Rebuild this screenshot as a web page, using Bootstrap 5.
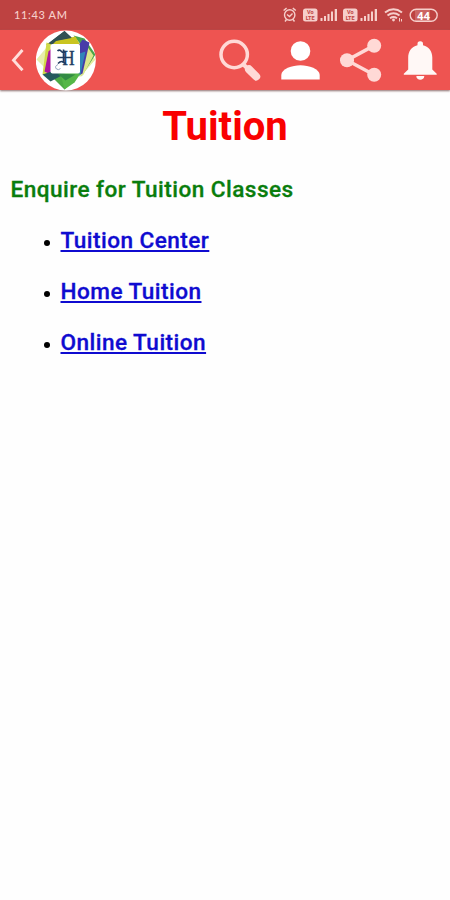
<!DOCTYPE html>
<html lang="en">
<head>
<meta charset="utf-8">
<meta name="viewport" content="width=device-width, initial-scale=1">
<title>Tuition</title>
<link href="https://cdn.jsdelivr.net/npm/bootstrap@5.3.0/dist/css/bootstrap.min.css" rel="stylesheet">
<style>
body{font-family:Roboto,"Liberation Sans",sans-serif;background:#fefefe;color:#000;height:900px;overflow:hidden}
svg{display:block;flex:none}
.status{height:30px;background:#be4241;color:#f6cfcb;padding:0 11px 0 14px}
.clock{font:500 11px/30px Lato,sans-serif;letter-spacing:.65px}
.appbar{height:60px;background:#ee5451;padding:0 13px 0 11px;box-shadow:0 1px 2px #8b6c6c}
.brand-mark{margin-left:12px}
.page-title{font-size:40px;line-height:48px;font-weight:700;color:#f90000;margin:13px 0 0}
.enquire{font-size:22.600px;line-height:28px;font-weight:500;letter-spacing:.45px;color:#0a7d0d;margin:25px 0 0 10.500px;-webkit-text-stroke:.3px}
.choices{margin:23px 0 0;padding-left:43px}
.choices li{display:flex;align-items:center;height:28px;margin-bottom:23px}
.choices li::before{content:"";width:6px;height:6px;border-radius:50%;background:#000;margin:3px 11px 0 .500px}
.choices a{font-size:22.600px;line-height:28px;font-weight:500;letter-spacing:.45px;-webkit-text-stroke:.3px;color:#0f0bd0;text-decoration:underline;text-decoration-thickness:2px;text-underline-offset:2px;text-decoration-skip-ink:none}
</style>
</head>
<body>
<header>
<div class="status d-flex align-items-center justify-content-between">
  <span class="clock">11:43 AM</span>
  <svg width="156" height="20" viewBox="284 6 156 20" fill="none" stroke="#f6cfcb" stroke-width="1.400">
    <circle cx="290.700" cy="16" r="5.200"/><path d="M288 15.500l2.500 2 3-3M284.600 11.500l3-2.400M296.800 11.500l-3-2.400M287.500 20.500l-1.500 2M294 20.500l1.500 2"/>
    <g fill="#f6cfcb" stroke="none">
      <rect x="304" y="9.500" width="14.500" height="13" rx="2.500"/><rect x="344" y="9.500" width="14.500" height="13" rx="2.500"/>
      <path d="M321.500 19h2v3h-2zM325 17h2v5h-2zM328.500 15h2v7h-2zM332 12.500h2v9.500h-2zM335.700 10h2.300v12h-2.300z"/>
      <path d="M361.500 19h2v3h-2zM365 17h2v5h-2zM368.500 15h2v7h-2zM372 12.500h2v9.500h-2zM375.700 10h2.300v12h-2.300z"/>
    </g>
    <g fill="#be4241" stroke="none" font-family="Roboto,sans-serif" font-weight="700" font-size="5.500" text-anchor="middle">
      <text x="311.200" y="15.300">Vo</text><text x="311.200" y="21">LTE</text><text x="351.200" y="15.300">Vo</text><text x="351.200" y="21">LTE</text>
    </g>
    <path stroke-width="2" d="M386 13.500q8.500-6.500 17 0M388.500 16.500q6-4.500 12 0M391 19.300q3.500-2.500 7 0"/>
    <circle cx="394.500" cy="21" r="1.400" fill="#f6cfcb" stroke="none"/><path d="M400.500 19v3.500M402.500 20v2.500" stroke-width="1"/>
    <rect x="411.200" y="10.200" width="27" height="12" rx="6"/>
    <rect x="416" y="10.500" width="15" height="11.500" fill="#f6cfcb" opacity=".25" stroke="none"/>
    <text x="424.500" y="20.500" fill="#fff" stroke="none" font-family="Roboto,sans-serif" font-size="11.500" font-weight="700" text-anchor="middle">44</text>
  </svg>
</div>
<nav class="appbar d-flex align-items-center justify-content-between" aria-label="Main">
  <div class="d-flex align-items-center">
    <svg width="13" height="24" viewBox="0 0 13 24" fill="none" stroke="#ffdedb" stroke-width="2.900"><path d="M11.500 2L2.500 12.300l9 10"/></svg>
    <svg class="brand-mark" width="61" height="62" viewBox="36.500 29.500 61 62">
      <defs><clipPath id="disc"><circle cx="66.300" cy="61" r="30"/></clipPath></defs>
      <circle cx="66.300" cy="61" r="30" fill="#fff"/>
      <g clip-path="url(#disc)">
        <path d="M37 60l15-18v33z" fill="#e7efac"/>
        <path d="M96 60L80 43v35z" fill="#e5eca0"/>
        <path d="M65 31.500L46.500 45.500h34z" fill="#315153"/>
        <path d="M65 90L48 73h33z" fill="#4caa43"/>
        <path d="M74 36l11 3 11 16-14 22V46z" fill="#4aa44a"/>
        <path d="M94 56l-10 19-3 2 6-31z" fill="#dce78c"/>
        <path d="M57 41l19-4 5 9H52z" fill="#c9c420"/>
        <path d="M65 31.500l-14 11 21-4z" fill="#315153"/>
        <path d="M83 40l7 3-7 31-4 2V46z" fill="#473ca9"/>
        <path d="M80 54l6-2-5 23-2 2z" fill="#3184b9"/>
        <path d="M47 43l5 2v31l-9-1z" fill="#d0d947"/>
        <path d="M49 52l4-4v28l-8-4z" fill="#ab169e"/>
        <path d="M43 75l9-3 14 2-15 8z" fill="#26595d"/>
        <path d="M61 74h20l-6 9-10 7z" fill="#55b747"/>
        <path d="M58 74l18 1-10 6z" fill="#328b43"/>
      </g>
      <rect x="51" y="44.500" width="29.500" height="29.500" rx="2" fill="#fff"/>
      <text x="69" y="65.500" text-anchor="middle" font-family="'Liberation Serif',serif" font-weight="400" font-size="20" textLength="12" lengthAdjust="spacingAndGlyphs" fill="#203d63" stroke="#203d63" stroke-width=".5">H</text>
      <path d="M58 51.500q2-2 4 .5t4-.5M58 58h8M64 50v13M58.500 64q3-3 5-1.500t3 1" fill="none" stroke="#203d63" stroke-width="1.600"/>
      <path d="M58.500 65q-4 2-1.500 4.500 2 1.500 4-.5" fill="none" stroke="#8196b5" stroke-width=".9"/>
    </svg>
  </div>
  <div class="d-flex align-items-center">
    <svg width="219" height="60" viewBox="218 30 219 60">
      <g fill="none" stroke="#ffd9d6">
        <circle cx="234.200" cy="54.500" r="13.200" stroke-width="3.500"/>
        <path d="M243.500 64.500l5 5" stroke-width="4"/><path d="M249 69.300l7.200 7.200" stroke-width="8" stroke-linecap="round"/>
        <path d="M374 45.600L347 60.200l27 14.600" stroke-width="3.500"/>
      </g>
      <g fill="#ffd9d6"><circle cx="374.200" cy="45.700" r="7"/><circle cx="347" cy="60.200" r="7"/><circle cx="374.200" cy="74.800" r="7"/></g>
      <g fill="#fff"><circle cx="300.500" cy="51" r="9.800"/><path d="M281.300 79.500v-4.500c0-6 11-9.700 19.200-9.700s19.200 3.700 19.200 9.700v4.500z"/></g>
      <path d="M420.300 41.300a2.700 2.700 0 0 1 2.700 2.800v1.200c6.300 1.500 9.300 6.600 9.300 12.200V69.500l4.400 4.200v1h-32.900v-1l4.400-4.200V57.500c0-5.600 3-10.700 9.300-12.200v-1.200a2.700 2.700 0 0 1 2.800-2.800zM416.300 76h8c0 5-8 5-8 0z" fill="#fff8f6"/>
    </svg>
  </div>
</nav>
</header>
<main>
  <h1 class="page-title text-center">Tuition</h1>
  <h2 class="enquire">Enquire for Tuition Classes</h2>
  <ul class="choices list-unstyled">
    <li><a href="#">Tuition Center</a></li>
    <li><a href="#">Home Tuition</a></li>
    <li><a href="#">Online Tuition</a></li>
  </ul>
</main>
<script src="https://cdn.jsdelivr.net/npm/bootstrap@5.3.0/dist/js/bootstrap.bundle.min.js"></script>
</body>
</html>
